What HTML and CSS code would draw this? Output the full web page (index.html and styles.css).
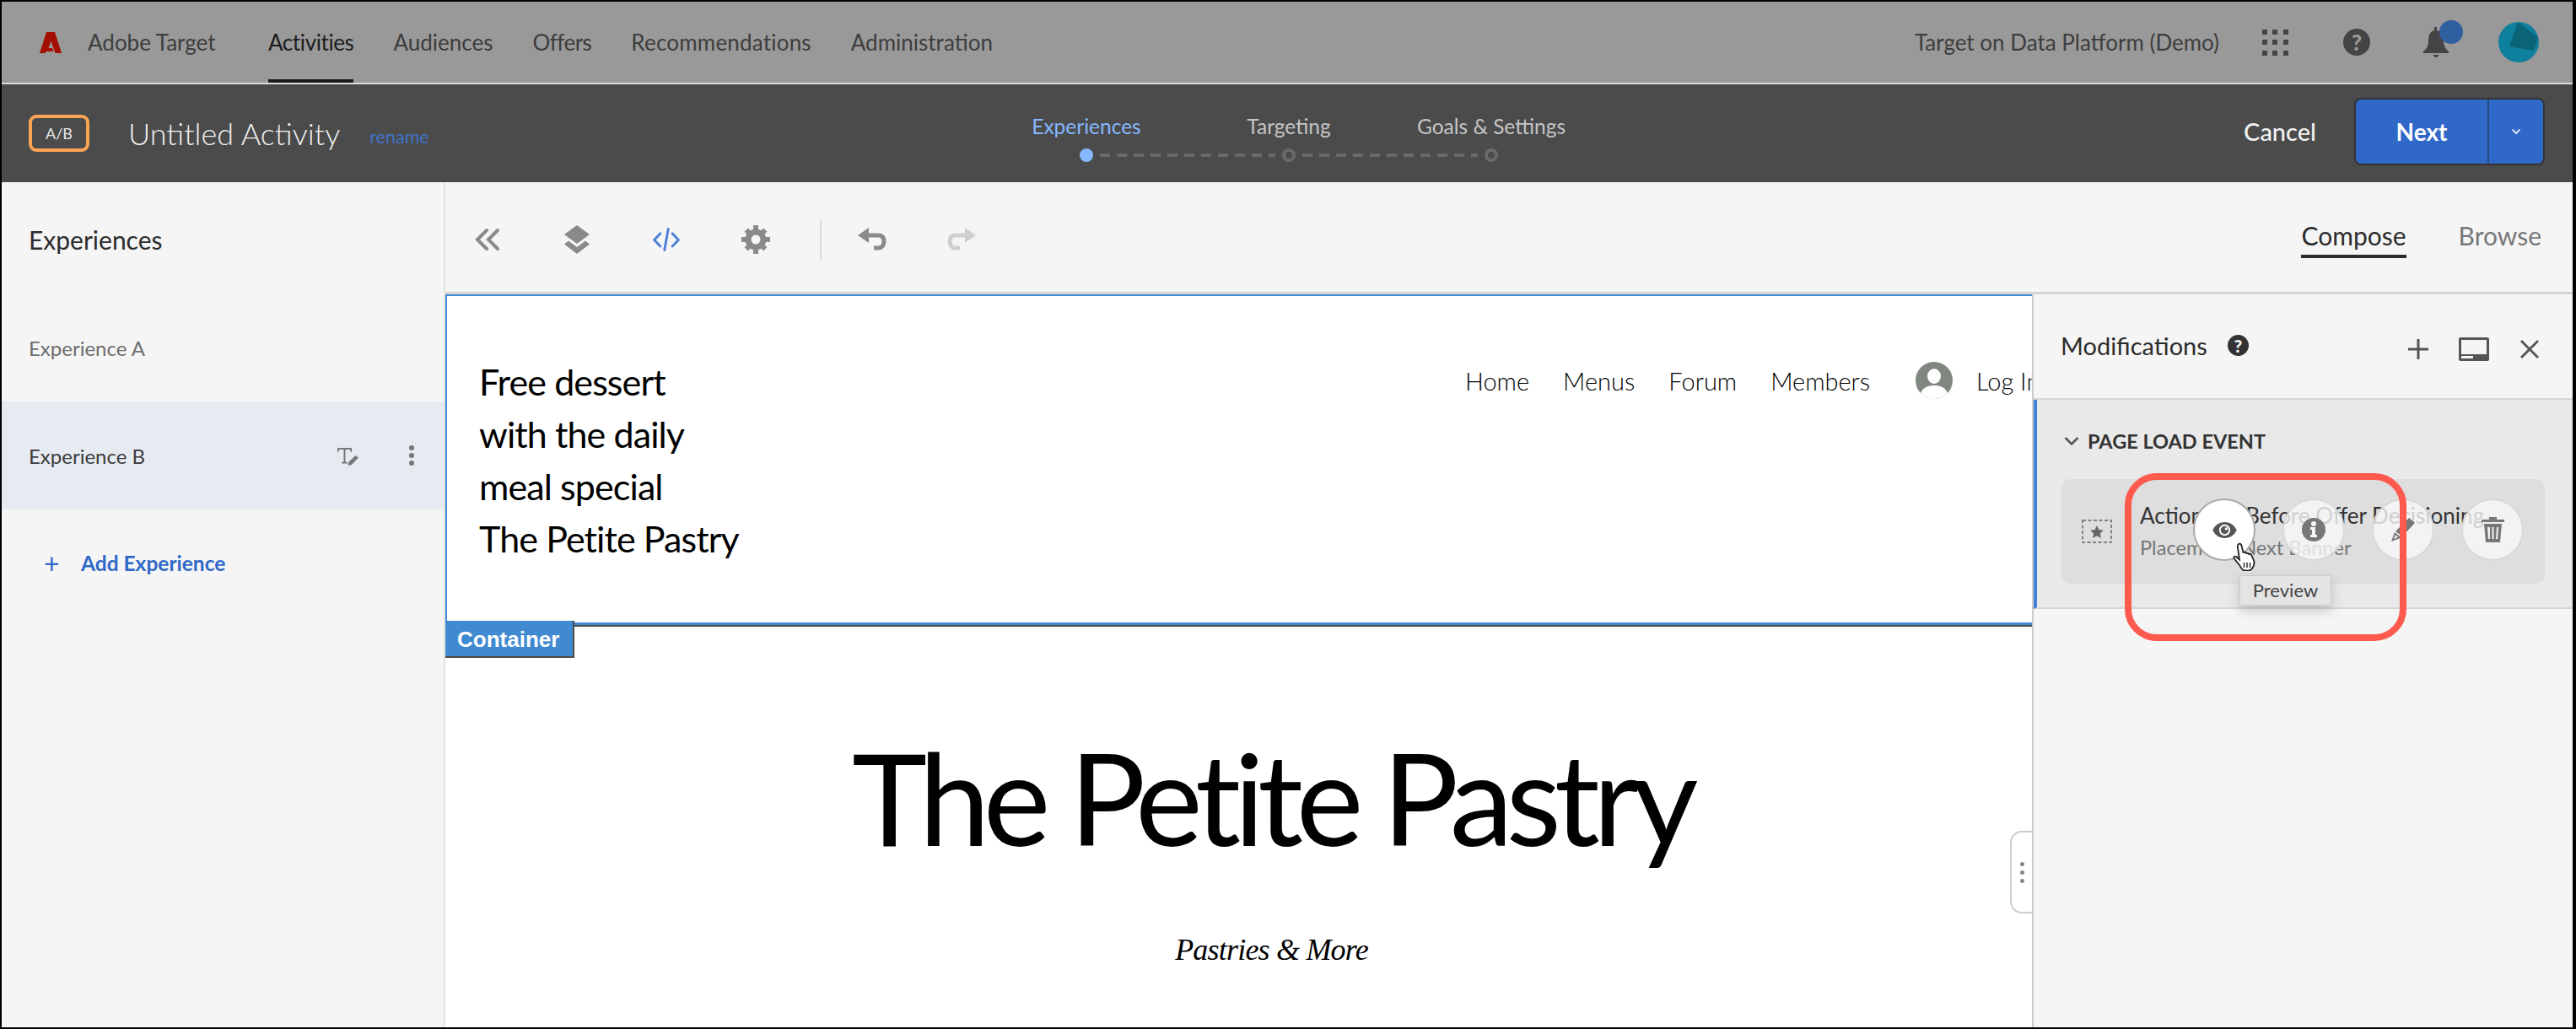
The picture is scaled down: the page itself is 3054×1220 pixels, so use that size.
FILE: index.html
```html
<!DOCTYPE html>
<html lang="en">
<head>
    <meta charset="UTF-8">
    <title>Adobe Target - Untitled Activity</title>
    <link rel="stylesheet" href="styles.css">
</head>
<body>
<div class="app">
    <header class="topbar">
        <svg class="logo" viewBox="0 0 26 25"><path d="M8 0H18L26 25H18.500L13.500 11 10.500 19H15L16.500 23H7.500L6.800 25H0Z"/></svg>
        <span class="brand">Adobe Target</span>
        <nav class="mainnav">
            <a class="active">Activities</a>
            <a>Audiences</a>
            <a class="tight">Offers</a>
            <a class="wide">Recommendations</a>
            <a>Administration</a>
        </nav>
        <div class="topright">
            <span class="org">Target on Data Platform (Demo)</span>
            <svg class="ic-grid" viewBox="0 0 31 31"><g><rect x="0" y="0" width="6" height="6"/><rect x="12" y="0" width="6" height="6"/><rect x="25" y="0" width="6" height="6"/><rect x="0" y="12" width="6" height="6"/><rect x="12" y="12" width="6" height="6"/><rect x="25" y="12" width="6" height="6"/><rect x="0" y="25" width="6" height="6"/><rect x="12" y="25" width="6" height="6"/><rect x="25" y="25" width="6" height="6"/></g></svg>
            <span class="help help-top">?</span>
            <div class="bell">
                <svg viewBox="0 0 30 36"><path d="M13 0h3v4c6 1 8 6 8 12 0 6 2 10 6 13v2H0v-2c4-3 6-7 6-13 0-6 2-11 7-12z"/><path d="M11 33h8l-4 4z"/></svg>
                <span class="bell-dot"></span>
            </div>
            <svg class="avatar" viewBox="0 0 48 48"><circle cx="24" cy="24" r="24" fill="#0f7f9e"/><path d="M23 0 47 18 42 34 13 29z" fill="#0b6378"/></svg>
        </div>
    </header>

    <div class="activitybar">
        <div class="activity-name">
            <span class="ab-badge">A/B</span>
            <span class="activity-title">Untitled Activity</span>
            <a class="rename">rename</a>
        </div>
        <div class="steps">
            <div class="step-labels">
                <span class="current">Experiences</span>
                <span>Targeting</span>
                <span>Goals &amp; Settings</span>
            </div>
            <div class="step-track">
                <span class="dot current"></span>
                <span class="dash"></span>
                <span class="dot"></span>
                <span class="dash"></span>
                <span class="dot"></span>
            </div>
        </div>
        <div class="activity-actions">
            <span class="cancel">Cancel</span>
            <div class="next-btn">
                <span class="next-label">Next</span>
                <span class="next-more"><svg viewBox="0 0 12 8"><path d="M1.500 1.500 6 6l4.500-4.500"/></svg></span>
            </div>
        </div>
    </div>

    <div class="workspace">
        <aside class="sidebar">
            <h2>Experiences</h2>
            <div class="exp-row">Experience A</div>
            <div class="exp-row selected">
                <span>Experience B</span>
                <span class="exp-tools">
                    <svg class="ic-rename" viewBox="0 0 25 21"><path d="M0 0h17v5h-1.300l-.7-3H9.500v14.500l2.500.8V18.500H5v-1.200l2.500-.8V2H2l-.7 3H0z"/><path d="M21.500 9 25 11.500 17 20l-4.500 1 1-4.500z"/></svg>
                    <svg class="ic-kebab" viewBox="0 0 6 24"><circle cx="3" cy="3" r="3"/><circle cx="3" cy="12" r="3"/><circle cx="3" cy="21" r="3"/></svg>
                </span>
            </div>
            <div class="add-exp"><span class="plus">+</span>Add Experience</div>
        </aside>

        <main class="editor">
            <div class="toolbar">
                <svg class="tool" viewBox="0 0 34 34"><path d="M16 6 5 17l11 11M29 6 18 17l11 11" fill="none" stroke="#8a8a8a" stroke-width="4" stroke-linecap="round"/></svg>
                <svg class="tool" viewBox="0 0 34 34"><path d="M17 0 32 11 17 22 2 11z" fill="#8a8a8a"/><path d="M7 18.500l10 7.500 10-7.500 5 4L17 34 2 22.500z" fill="#8a8a8a"/></svg>
                <svg class="tool ic-code" viewBox="0 0 38 34"><path d="M11 9 3 17.500l8 8.500M27 9l8 8.500-8 8.500M21.500 3 16.500 31" fill="none" stroke="#4a7fd6" stroke-width="3.200" stroke-linecap="round"/></svg>
                <svg class="tool" viewBox="0 0 34 34"><circle cx="17" cy="17" r="9" fill="none" stroke="#8a8a8a" stroke-width="7"/><g fill="#8a8a8a"><rect x="14" y="0" width="6" height="34"/><rect x="0" y="14" width="34" height="6"/><rect x="14" y="1" width="6" height="32" transform="rotate(45 17 17)"/><rect x="14" y="1" width="6" height="32" transform="rotate(-45 17 17)"/></g><circle cx="17" cy="17" r="5.500" fill="#f5f5f5"/></svg>
                <span class="tool-sep"></span>
                <svg class="tool" viewBox="0 0 34 28"><path d="M0 9 13 0v18z" fill="#8a8a8a"/><path d="M11 9h13c5 0 7 3 7 7s-2 8-7 8h-5" fill="none" stroke="#8a8a8a" stroke-width="5"/></svg>
                <svg class="tool" viewBox="0 0 34 28"><path d="M34 9 21 0v18z" fill="#cfcfcf"/><path d="M23 9H10c-5 0-7 3-7 7s2 8 7 8h5" fill="none" stroke="#cfcfcf" stroke-width="5"/></svg>
                <div class="view-tabs">
                    <span class="active">Compose</span>
                    <span>Browse</span>
                </div>
            </div>

            <div class="editor-body">
                <section class="preview">
                    <div class="site-head">
                        <div class="promo">
                            <div>Free dessert</div>
                            <div>with the daily</div>
                            <div>meal special</div>
                            <div>The Petite Pastry</div>
                        </div>
                        <nav class="site-nav">
                            <a>Home</a>
                            <a>Menus</a>
                            <a>Forum</a>
                            <a>Members</a>
                            <svg class="site-user" viewBox="0 0 44 44"><circle cx="22" cy="22" r="22" fill="#7f877f"/><ellipse cx="22" cy="17" rx="8" ry="9" fill="#fff"/><path d="M6 37c3-7 9-9 16-9s13 2 16 9c-4 4-10 7-16 7S10 41 6 37z" fill="#fff"/></svg>
                            <a class="login">Log In</a>
                        </nav>
                    </div>
                    <span class="container-tag">Container</span>
                    <div class="hero">
                        <h1>The Petite Pastry</h1>
                        <p>Pastries &amp; More</p>
                    </div>
                    <div class="drag-handle"><i></i><i></i><i></i></div>
                </section>

                <aside class="panel">
                    <div class="panel-head">
                        <span class="panel-title">Modifications</span>
                        <span class="help help-panel">?</span>
                        <span class="panel-tools">
                            <svg class="ic-plus" viewBox="0 0 24 24"><path d="M10.500 0h3v10.500H24v3H13.500V24h-3V13.500H0v-3h10.500z"/></svg>
                            <svg class="ic-monitor" viewBox="0 0 36 28"><path fill-rule="evenodd" d="M2 0h32a2 2 0 0 1 2 2v24a2 2 0 0 1-2 2H2a2 2 0 0 1-2-2V2a2 2 0 0 1 2-2zm1 3v17h30V3zM3 22v3h14v-3z"/></svg>
                            <svg class="ic-close" viewBox="0 0 24 24"><path d="M3 1l9 9 9-9 2 2-9 9 9 9-2 2-9-9-9 9-2-2 9-9-9-9z"/></svg>
                        </span>
                    </div>
                    <div class="mod-section">
                        <div class="mod-section-title">
                            <svg viewBox="0 0 18 12"><path d="M1.500 2 9 9.500 16.500 2" fill="none" stroke="#555" stroke-width="2.500"/></svg>
                            PAGE LOAD EVENT
                        </div>
                        <div class="mod-card">
                            <svg class="ic-star" viewBox="0 0 36 28"><rect x="1" y="1" width="34" height="26" fill="none" stroke="#666" stroke-width="1.500" stroke-dasharray="4 2.500"/><path d="M18 7l2.400 4.900 5.400.8-3.900 3.800.9 5.400-4.800-2.600-4.800 2.600.9-5.400-3.900-3.800 5.400-.8z" fill="#666"/></svg>
                            <div class="mod-text">
                                <div class="mod-name">Action Set Before Offer Decisioning</div>
                                <div class="mod-sub">Placement: Next Banner</div>
                            </div>
                            <div class="mod-actions">
                                <span class="round hover">
                                    <svg class="ic-eye" viewBox="0 0 30 20"><path fill-rule="evenodd" d="M15 0c7 0 12 4 15 10-3 6-8 10-15 10S3 16 0 10C3 4 8 0 15 0zm0 3a7 7 0 1 0 0 14 7 7 0 0 0 0-14z" fill="#555"/><path fill-rule="evenodd" d="M15 5a5 5 0 1 0 0 10 5 5 0 0 0 0-10zm2 1.500a1.800 1.800 0 1 1 0 3.600 1.800 1.800 0 0 1 0-3.600z" fill="#555"/></svg>
                                </span>
                                <span class="round">
                                    <svg viewBox="0 0 28 28"><circle cx="14" cy="14" r="14" fill="#777"/><circle cx="14" cy="7" r="3" fill="#f7f7f7"/><path d="M10 11h6v9h2v3h-8v-3h2v-6h-2z" fill="#f7f7f7"/></svg>
                                </span>
                                <span class="round">
                                    <svg class="ic-pencil" viewBox="0 0 28 28"><path d="M21 0l7 6-15 16-8-6z" fill="#777"/><path fill-rule="evenodd" d="M4 17l8 6.500L0 28zm1 3L3 25l5-2z" fill="#777"/></svg>
                                </span>
                                <span class="round">
                                    <svg class="ic-trash" viewBox="0 0 27 30"><path fill-rule="evenodd" d="M9 0h9v3h9v3H0V3h9zM3 8h21l-2 22H5zm4 4 1 14h2V12zm5.500 0v14h2V12zM18 12l-1 14h2l1-14z" fill="#777"/></svg>
                                </span>
                            </div>
                            <div class="tooltip">Preview</div>
                            <svg class="cursor" viewBox="0 0 30 34"><path d="M7 2c1.500-1 3 0 3.500 2l2 8 1-.5c1.200 0 2 .5 2.500 1.500 1-.5 2.500-.3 3 1 1.200-.5 2.600 0 3.200 1.200l3 6.800c1 4-.8 9-5.200 11.500H13c-2.200-1.500-3.500-4-5-6.500L1.600 19c-.8-1.500.6-3 2.200-2.200L8 20.500 5.800 5C5.700 3.700 6 2.600 7 2z" fill="#fff" stroke="#222" stroke-width="1.800"/><path d="M13.500 24v6M17 24v6M20.500 24v6" stroke="#222" stroke-width="1.400"/></svg>
                        </div>
                    </div>
                    <div class="callout"></div>
                </aside>
            </div>
        </main>
    </div>
</div>
</body>
</html>
```

FILE: styles.css
```css
* {
    box-sizing: border-box;
}
html, body {
    margin: 0;
    padding: 0;
    background: #000;
}
body {
    width: 3054px;
    height: 1220px;
    overflow: hidden;
    font-family: Lato, "Open Sans", sans-serif;
    color: #333;
}
svg {
    display: block;
    flex: none;
}
.app {
    display: flex;
    flex-direction: column;
    width: 3054px;
    height: 1220px;
    border-style: solid;
    border-color: #000;
    border-width: 2px 4px 2px 2px;
    background: #f5f5f5;
}

/* top bar */
.topbar {
    display: flex;
    align-items: center;
    flex: none;
    height: 98px;
    padding-left: 45px;
    background: #999;
    border-bottom: 2px solid #ddd;
    font-size: 26px;
    color: #3d3d3d;
}
.logo {
    width: 26px;
    height: 25px;
    fill: #a30f00;
}
.brand {
    margin-left: 31px;
    width: 214px;
}
.mainnav {
    display: flex;
    gap: 47px;
    height: 96px;
}
.mainnav a {
    display: flex;
    align-items: center;
    border-bottom: 4px solid transparent;
    padding-top: 4px;
}
.mainnav a.active {
    color: #1c1c1c;
    border-color: #1c1c1c;
    letter-spacing: -0.4px;
}
.mainnav a.tight {
    letter-spacing: -0.5px;
}
.mainnav a.wide {
    letter-spacing: 0.2px;
}
.topright {
    display: flex;
    align-items: center;
    margin-left: auto;
    padding-right: 40px;
}
.org {
    margin-right: 51px;
}
.ic-grid {
    width: 31px;
    height: 31px;
    fill: #444;
    margin-right: 65px;
}
.help {
    display: flex;
    align-items: center;
    justify-content: center;
    border-radius: 50%;
    font-weight: 900;
}
.help-top {
    width: 32px;
    height: 32px;
    margin-right: 63px;
    background: #444;
    color: #999;
    font-size: 26px;
}
.bell {
    position: relative;
    width: 30px;
    height: 36px;
    margin-right: 59px;
    fill: #444;
}
.bell-dot {
    position: absolute;
    left: 19px;
    top: -8px;
    width: 28px;
    height: 28px;
    border-radius: 50%;
    background: #2f5f9e;
}
.avatar {
    width: 48px;
    height: 48px;
}

/* activity bar */
.activitybar {
    display: grid;
    grid-template-columns: 1fr 720px 1fr;
    align-items: center;
    flex: none;
    height: 116px;
    background: #4b4b4b;
    color: #f2f2f2;
}
.activity-name {
    display: flex;
    align-items: center;
    padding-left: 32px;
}
.ab-badge {
    display: flex;
    align-items: center;
    justify-content: center;
    width: 72px;
    height: 44px;
    border: 4px solid #f9a353;
    border-radius: 9px;
    font-size: 18px;
    color: #e8e8e8;
}
.activity-title {
    margin-left: 46px;
    font-size: 36px;
    font-weight: 300;
}
.rename {
    margin-left: 35px;
    margin-top: 8px;
    font-size: 21.500px;
    color: #3f74c6;
}
.steps {
    display: flex;
    flex-direction: column;
    gap: 12px;
    padding: 10px 0 0 2px;
}
.step-labels {
    display: grid;
    grid-template-columns: repeat(3, 240px);
    text-align: center;
    font-size: 24.500px;
    color: #c4c4c4;
}
.step-labels .current {
    color: #85b8ff;
}
.step-track {
    display: flex;
    align-items: center;
    gap: 8px;
    margin: 0 112px;
    width: 496px;
}
.dot {
    width: 16px;
    height: 16px;
    flex: none;
    border: 4px solid #6a6a6a;
    border-radius: 50%;
}
.dot.current {
    background: #85b8ff;
    border-color: #85b8ff;
}
.dash {
    flex: 1;
    height: 4px;
    background: repeating-linear-gradient(90deg, #6a6a6a 0 12px, transparent 12px 20px);
}
.activity-actions {
    display: flex;
    align-items: center;
    justify-content: flex-end;
    padding-right: 33px;
    margin-top: -5px;
}
.cancel {
    margin-right: 45px;
    font-size: 29px;
    font-weight: 500;
}
.next-btn {
    display: flex;
    width: 226px;
    height: 80px;
    background: #3068c8;
    border: 2px solid #333;
    border-radius: 8px;
    color: #fff;
    font-size: 28px;
    font-weight: 700;
}
.next-label {
    display: flex;
    align-items: center;
    justify-content: center;
    width: 158px;
    border-right: 2px solid #2b4a80;
}
.next-more {
    display: flex;
    flex: 1;
    align-items: center;
    justify-content: center;
}
.next-more svg {
    width: 12px;
    height: 8px;
    fill: none;
    stroke: #fff;
    stroke-width: 1.600;
}

/* layout below the bars */
.workspace {
    display: flex;
    flex: 1;
    min-height: 0;
}
.sidebar {
    flex: none;
    width: 526px;
    border-right: 2px solid #e3e3e3;
}
.sidebar h2 {
    margin: 0;
    padding: 50px 0 0 32px;
    height: 164px;
    font-size: 30px;
    font-weight: 400;
    color: #2c2c2c;
}
.exp-row {
    display: flex;
    align-items: center;
    justify-content: space-between;
    height: 128px;
    padding: 0 32px;
    font-size: 24px;
    color: #6e6e6e;
}
.sidebar h2 + .exp-row {
    height: 96px;
    padding-bottom: 32px;
}
.exp-row.selected {
    background: #e6ebf2;
    color: #3c3c3c;
}
.exp-tools {
    display: flex;
    align-items: center;
    gap: 60px;
    margin-right: 3px;
}
.ic-rename {
    width: 25px;
    height: 21px;
    fill: #777;
    margin-top: 2px;
}
.ic-kebab {
    width: 6px;
    height: 24px;
    fill: #777;
}
.add-exp {
    display: flex;
    align-items: center;
    padding: 44px 0 0 50px;
    font-size: 24.500px;
    font-weight: 700;
    color: #2f68c7;
}
.plus {
    width: 44px;
    font-weight: 400;
    font-size: 32px;
}
.editor {
    display: flex;
    flex-direction: column;
    flex: 1;
    min-width: 0;
}
.toolbar {
    display: flex;
    align-items: center;
    flex: none;
    height: 133px;
    padding: 6px 37px 0 33px;
    border-bottom: 3px solid #d5d5d5;
}
.tool {
    width: 34px;
    height: 34px;
    margin-right: 72px;
}
.tool-sep {
    width: 2px;
    height: 48px;
    margin: 0 43px 0 -13px;
    background: #dcdcdc;
}
.view-tabs {
    display: flex;
    gap: 62px;
    margin-left: auto;
    margin-top: -2px;
    font-size: 30px;
    color: #777;
}
.view-tabs span {
    padding-bottom: 5px;
    border-bottom: 4px solid transparent;
}
.view-tabs .active {
    border-bottom-color: #2c2c2c;
    color: #2c2c2c;
}
.editor-body {
    display: flex;
    flex: 1;
    min-height: 0;
}

/* the page being edited */
.preview {
    position: relative;
    flex: none;
    width: 1881px;
    overflow: hidden;
    background: #fff;
    color: #000;
}
.site-head {
    display: flex;
    align-items: center;
    height: 392px;
    padding-left: 38px;
    border-style: solid;
    border-color: #3f8ad0;
    border-width: 2px 0 3px 2px;
    box-shadow: 0 2px 0 #4b4b4b;
}
.promo {
    width: 1169px;
    flex: none;
    font-size: 43px;
    line-height: 62px;
    padding-top: 2px;
    letter-spacing: -0.9px;
}
.site-nav {
    display: flex;
    align-items: center;
    align-self: flex-start;
    gap: 40px;
    font-size: 29px;
    font-weight: 300;
    white-space: nowrap;
    margin-top: 78px;
}
.site-user {
    width: 44px;
    height: 44px;
    margin: 0 -12px 0 14px;
}
.container-tag {
    position: absolute;
    left: 0;
    top: 387px;
    width: 153px;
    height: 44px;
    padding: 7px 0 0 14px;
    background: #3f8ad0;
    border-right: 2px solid #4b4b4b;
    border-bottom: 2px solid #4b4b4b;
    font-family: "Liberation Sans", sans-serif;
    font-size: 26px;
    font-weight: 700;
    color: #fff;
}
.hero {
    padding: 114px 0 0 78px;
    text-align: center;
}
.hero h1 {
    margin: 0;
    font-size: 151px;
    line-height: 180px;
    font-weight: 400;
    letter-spacing: -8.200px;
}
.hero p {
    margin: 70px 0 0;
    font-family: "Liberation Serif", serif;
    font-style: italic;
    font-size: 36px;
    letter-spacing: -0.8px;
}
.drag-handle {
    position: absolute;
    right: 0;
    top: 636px;
    display: flex;
    flex-direction: column;
    align-items: center;
    justify-content: center;
    gap: 5px;
    width: 26px;
    height: 98px;
    background: #fff;
    border: 2px solid #ccc;
    border-right: 0;
    border-radius: 14px 0 0 14px;
}
.drag-handle i {
    width: 5px;
    height: 5px;
    border-radius: 50%;
    background: #888;
}

/* modifications panel */
.panel {
    position: relative;
    flex: 1;
    border-left: 2px solid #ccc;
}
.panel-head {
    display: flex;
    align-items: center;
    height: 125px;
    padding: 0 39px 2px 32px;
    border-bottom: 2px solid #d5d5d5;
}
.panel-title {
    font-size: 29px;
    color: #2c2c2c;
}
.help-panel {
    width: 25px;
    height: 25px;
    margin-left: 24px;
    background: #333;
    color: #f5f5f5;
    font-size: 21px;
}
.panel-tools {
    display: flex;
    align-items: center;
    margin-left: auto;
    margin-top: 8px;
    fill: #555;
}
.ic-plus {
    width: 24px;
    height: 24px;
}
.ic-monitor {
    width: 36px;
    height: 28px;
    margin: 0 36px;
}
.ic-close {
    width: 24px;
    height: 24px;
}
.mod-section {
    height: 248px;
    padding: 35px 33px 0 29px;
    background: #e9e9e9;
    border-left: 4px solid #3f7fd6;
    border-bottom: 2px solid #d5d5d5;
}
.mod-section-title {
    display: flex;
    align-items: center;
    gap: 10px;
    margin-left: 3px;
    font-size: 23.500px;
    font-weight: 700;
    color: #333;
}
.mod-section-title svg {
    width: 18px;
    height: 12px;
}
.mod-card {
    position: relative;
    display: flex;
    align-items: center;
    height: 124px;
    margin-top: 31px;
    padding-left: 24px;
    background: #dedede;
    border-radius: 10px;
}
.ic-star {
    width: 36px;
    height: 28px;
}
.mod-text {
    margin-left: 33px;
    white-space: nowrap;
    line-height: 38px;
}
.mod-name {
    font-size: 26px;
    color: #333;
}
.mod-sub {
    font-size: 23.600px;
    color: #777;
}
.mod-actions {
    position: absolute;
    left: 156px;
    top: 23px;
    display: flex;
    gap: 32px;
}
.round {
    display: flex;
    align-items: center;
    justify-content: center;
    width: 74px;
    height: 74px;
    border-radius: 50%;
    background: rgba(247, 247, 247, 0.8);
    border: 2px solid rgba(205, 205, 205, 0.7);
}
.round.hover {
    background: #fff;
    border-color: #aaa;
}
.round svg {
    width: 28px;
    height: 28px;
}
.round .ic-eye {
    width: 29px;
    height: 19px;
}
.round .ic-trash {
    width: 27px;
    height: 30px;
}
.tooltip {
    position: absolute;
    left: 211px;
    top: 114px;
    width: 109px;
    height: 36px;
    background: #e4e4e4;
    border: 1px solid #ccc;
    box-shadow: 0 6px 14px rgba(0, 0, 0, 0.18);
    text-align: center;
    font-size: 22px;
    line-height: 34px;
    color: #444;
}
.cursor {
    position: absolute;
    left: 203px;
    top: 75px;
    width: 30px;
    height: 34px;
}
.callout {
    position: absolute;
    left: 108px;
    top: 212px;
    width: 334px;
    height: 199px;
    border: 8px solid #fe5a4e;
    border-radius: 38px;
}
```
